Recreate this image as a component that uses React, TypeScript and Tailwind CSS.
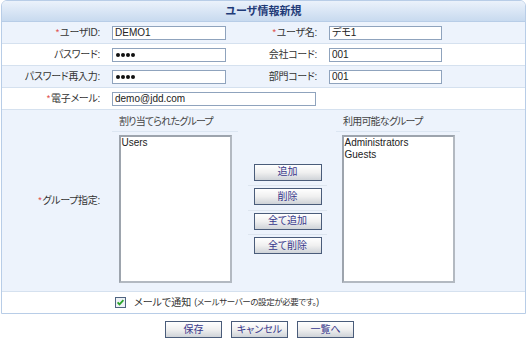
import { ReactNode } from "react";

const font = "font-['Liberation_Sans','Noto_Sans_CJK_JP',sans-serif] [font-feature-settings:'palt']";

function Req() {
  return <span className="mr-px text-[9px] text-[#e0443e]">*</span>;
}

function Label({ children, required }: { children: ReactNode; required?: boolean }) {
  return (
    <div className="flex items-center justify-end pr-[12px] text-[10px] tracking-[-0.3px] text-[#333]">
      {required && <Req />}
      {children}
    </div>
  );
}

function TextBox({ value, width }: { value: ReactNode; width: string }) {
  return (
    <div className="flex items-center">
      <div
        className={`${width} flex h-[14px] items-center border border-[#8fa3bd] bg-white pl-[2px] text-[10px] leading-none text-[#222]`}
      >
        {value}
      </div>
    </div>
  );
}

function Dots() {
  return (
    <span className="flex gap-[1px] pl-px">
      {[0, 1, 2, 3].map((i) => (
        <span key={i} className="h-[4px] w-[4px] rounded-full bg-[#111]" />
      ))}
    </span>
  );
}

function Btn({ children, w }: { children: ReactNode; w: string }) {
  return (
    <div
      className={`${w} flex h-[17px] items-center justify-center border border-[#4a5c7a] bg-gradient-to-b from-[#ffffff] via-[#f0f0f0] to-[#cfd3d8] text-[10px] leading-none text-[#38388c]`}
    >
      {children}
    </div>
  );
}

function GroupList({ title, items }: { title: string; items: string[] }) {
  return (
    <div className="flex w-full flex-col items-center">
      <div className="flex h-[22px] w-full items-center border-b border-[#dce6f2] pl-[7px] pt-[1px] text-[10px] tracking-[-0.8px] text-[#444]">
        {title}
      </div>
      <div className="mt-[3px] h-[148px] w-[113px] border-2 border-[#b3b9c1] border-t-[#9da4ad] border-l-[#9da4ad] bg-white px-[1px] text-[10px] leading-[12px] text-[#222]">
        {items.map((it) => (
          <div key={it}>{it}</div>
        ))}
      </div>
    </div>
  );
}

export default function App() {
  const row = "grid h-[22px] grid-cols-[110px_136px_81px_1fr] border-b border-[#d5e1ef]";
  return (
    <div className={`${font} h-[346px] w-[527px] bg-white`}>
      <div className="ml-px w-[525px] overflow-hidden rounded-t-[6px] border border-[#b8cde7]">
        <div className="flex h-[21px] items-center justify-center border-b border-[#b8cde7] bg-gradient-to-b from-[#ebf2fb] to-[#c8daef] text-[11px] font-bold text-[#1f3b78]">
          ユーザ情報新規
        </div>

        <div className={`${row} bg-[#edf3fc]`}>
          <Label required>ユーザID:</Label>
          <TextBox value="DEMO1" width="w-[114px]" />
          <Label required>ユーザ名:</Label>
          <TextBox value="デモ1" width="w-[113px]" />
        </div>
        <div className={`${row} bg-white`}>
          <Label>パスワード:</Label>
          <TextBox value={<Dots />} width="w-[114px]" />
          <Label>会社コード:</Label>
          <TextBox value="001" width="w-[113px]" />
        </div>
        <div className={`${row} bg-[#edf3fc]`}>
          <Label>パスワード再入力:</Label>
          <TextBox value={<Dots />} width="w-[114px]" />
          <Label>部門コード:</Label>
          <TextBox value="001" width="w-[113px]" />
        </div>
        <div className="grid h-[22px] grid-cols-[110px_1fr] border-b border-[#d5e1ef] bg-white">
          <Label required>電子メール:</Label>
          <TextBox value="demo@jdd.com" width="w-[204px]" />
        </div>

        <div className="flex h-[182px] border-b border-[#d5e1ef] bg-[#edf3fc]">
          <div className="w-[110px] shrink-0">
            <div className="flex h-full items-center justify-end pr-[12px] text-[10px] tracking-[-0.3px] text-[#333]">
              <Req />
              グループ指定:
            </div>
          </div>
          <div className="w-[126px] shrink-0">
            <GroupList title="割り当てられたグループ" items={["Users"]} />
          </div>
          <div className="ml-[10px] flex w-[79px] shrink-0 flex-col justify-center pt-[20px]">
            {["追加", "削除", "全て追加", "全て削除"].map((b, i) => (
              <div
                key={b}
                className={`flex h-[24.5px] justify-center pt-[2px] ${i < 3 ? "border-b border-[#dde5ef]" : ""}`}
              >
                <Btn w="w-[68px]">{b}</Btn>
              </div>
            ))}
          </div>
          <div className="ml-[9px] w-[124px] shrink-0">
            <GroupList title="利用可能なグループ" items={["Administrators", "Guests"]} />
          </div>
        </div>

        <div className="flex h-[21px] items-center bg-white pl-[113px] text-[10px] text-[#333]">
          <svg width="11" height="11" viewBox="0 0 11 11" className="mr-[8px]">
            <rect x="0.5" y="0.5" width="10" height="10" fill="#eef2f6" stroke="#4f6480" />
            <path d="M2.6 5.4 L4.5 7.4 L8.4 3.2" fill="none" stroke="#2aa52a" strokeWidth="1.8" />
          </svg>
          <span>メールで通知</span>
          <span className="ml-[3px] text-[8.5px] tracking-[-0.4px]">(メールサーバーの設定が必要です。)</span>
        </div>
      </div>

      <div className="mt-[7px] flex justify-center gap-[9px] pr-[8px]">
        <Btn w="w-[57px]">保存</Btn>
        <Btn w="w-[57px]">キャンセル</Btn>
        <Btn w="w-[57px]">一覧へ</Btn>
      </div>
    </div>
  );
}
